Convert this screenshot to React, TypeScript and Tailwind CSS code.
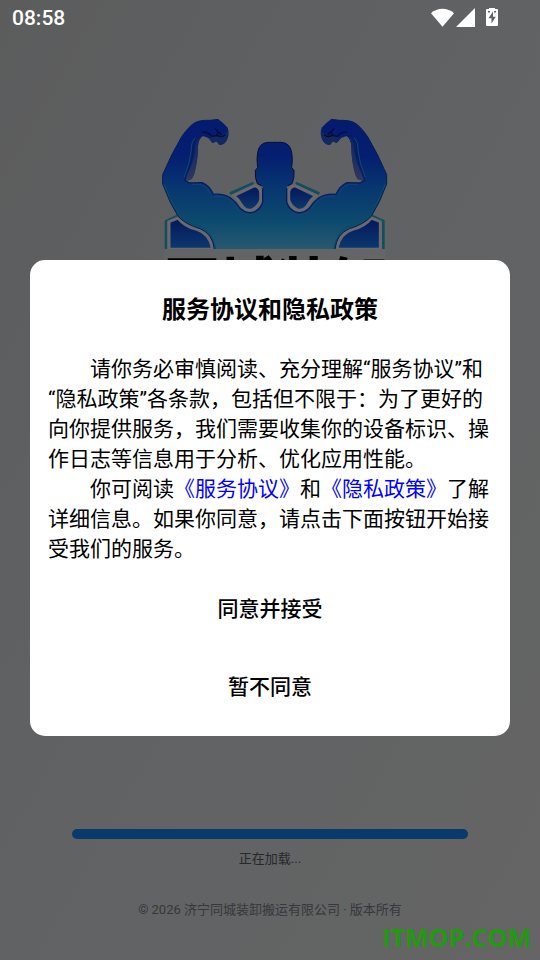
function StatusIcons() {
  return (
    <svg width="68" height="20" viewBox="0 0 68 20" fill="white" aria-hidden="true">
      <path d="M11.500 18.800 L0 5.200 C6-0.800 17-0.800 23 5.200 Z" />
      <path d="M44 0 V19 H25 Z" />
      <path
        fillRule="evenodd"
        d="M58 -0.500 H64 V1 H66 Q67 1 67 2 V17 Q67 18 66 18 H56 Q55 18 55 17 V2 Q55 1 56 1 H58 Z M62 3.500 L57.500 10.200 H60.500 V15.500 L64.800 8.800 H62 Z M57 3 V4.500 H59 V3 Z M63 3 V4.500 H65 V3 Z"
      />
    </svg>
  )
}

function HalfBody() {
  return (
    <g>
      {/* badge behind the shoulder */}
      <path d="M48 433 V348 L82 333" fill="none" stroke="#2a9cb4" strokeWidth="8" />
      <path d="M240 266 L311 234" fill="none" stroke="#2a9cb4" strokeWidth="9" />
      <path
        d="M57 433 V350 L84 339 Q104 364 140 373 Q180 385 188 433 Z"
        fill="url(#badge)"
        stroke="#d4d2de"
        strokeWidth="9"
      />
      <path
        d="M251 272 L314 242 Q332 246 332 264 V284 Q328 304 306 315 Q286 320 273 298 Q264 282 251 272 Z"
        fill="url(#badge)"
        stroke="#d4d2de"
        strokeWidth="9"
      />
      {/* arm, shoulder and half of the head */}
      <path
        d="M376 433 H193 Q188 386 150 371 Q106 358 84 334 L60 290 L38 237 V209 L65 150 L95 95 Q118 62 135 53 Q150 45 180 46 L205 43 L220 55 L233 68 Q239 88 232 102 Q226 119 208 120 L200 109 L188 114 L175 99 L158 93 Q146 102 144 123 Q144 159 137 185 Q134 206 126 222 L106 228 L118 234 L157 233 Q178 242 190 268 Q220 265 242 279 Q258 290 270 310 Q292 330 315 320 Q333 309 338 291 V245 L322 236 Q314 219 316 196 L323 188 Q319 162 323 142 Q328 113 355 112 H376 Z"
        fill="url(#body)"
      />
      <path
        d="M158 93 Q137 99 136 126 Q134 160 120 193 L105 226 Q124 229 132 210 Q143 176 144 123 Q145 101 158 93 Z"
        fill="url(#inner)"
      />
      <path
        d="M200 86 Q220 94 234 78 Q235 105 222 116 Q207 124 200 109 L188 114 L173 96 Q183 103 200 86 Z"
        fill="#2450c0"
      />
      <path
        d="M158 92 Q132 91 129 124 Q129 166 109 207 L104 226 L119 234 L157 233 Q178 242 190 268 M188 268 Q222 265 242 279 Q258 290 270 310 Q292 330 315 320 Q334 309 338 291 V250"
        fill="none"
        stroke="#0b3ac4"
        strokeWidth="4"
      />
      <path
        d="M136 98 Q123 110 124 135 Q120 174 102 218 M125 238 H153 Q171 244 183 268 M193 275 Q223 270 239 284 Q256 298 266 315 Q290 337 318 324"
        fill="none"
        stroke="#2f8ad8"
        strokeWidth="3"
      />
      <path
        d="M42 237 Q58 285 89 329 Q109 350 148 362 Q185 377 197 433"
        fill="none"
        stroke="#1b94d0"
        strokeWidth="4"
      />
      <path
        d="M205 43 L180 46 Q150 45 135 53 Q118 62 95 95 L65 150 L38 209 V237 L60 290 L84 334 Q106 358 150 371 Q188 386 193 433"
        fill="none"
        stroke="#0939a8"
        strokeWidth="3"
      />
      <path
        d="M156 82 Q174 78 185 94 L202 91 Q216 99 226 89 M195 70 L205 81 L199 92 M205 80 L215 89"
        fill="none"
        stroke="#05186e"
        strokeWidth="4"
      />
      <path
        d="M376 112 H355 Q328 113 323 142 Q319 162 323 188 L316 196 Q314 219 322 236 L335 242"
        fill="none"
        stroke="#101c70"
        strokeWidth="3"
      />
    </g>
  )
}

function Logo() {
  return (
    <div className="ml-[10px] w-[250px]">
      <svg className="block" width="250" height="144" viewBox="0 0 750 432" aria-hidden="true">
        <defs>
          <linearGradient id="body" gradientUnits="userSpaceOnUse" x1="0" y1="40" x2="0" y2="433">
            <stop offset="0" stopColor="#0a34e0" />
            <stop offset="0.300" stopColor="#0940e0" />
            <stop offset="0.550" stopColor="#1070e0" />
            <stop offset="0.780" stopColor="#1894dc" />
            <stop offset="1" stopColor="#50b4e0" />
          </linearGradient>
          <linearGradient id="badge" x1="0" y1="0" x2="0" y2="1">
            <stop offset="0" stopColor="#0a2cb4" />
            <stop offset="1" stopColor="#1774dc" />
          </linearGradient>
          <linearGradient id="inner" x1="0" y1="0" x2="0" y2="1">
            <stop offset="0" stopColor="#1a49c4" />
            <stop offset="1" stopColor="#5f6fb8" />
          </linearGradient>
        </defs>
        <HalfBody />
        <g transform="translate(748 0) scale(-1 1)">
          <HalfBody />
        </g>
      </svg>
      <p className="mx-[14px] bg-white/10 pt-1 text-center text-[56px] leading-[64px] font-black whitespace-nowrap text-black">
        同城装卸
      </p>
    </div>
  )
}

function SplashScreen() {
  return (
    <main className="flex min-h-screen flex-col items-center bg-linear-to-br from-[#b8b9ba] via-[#c2c5c8] to-[#cacaca] pt-[105px] pb-10">
      <Logo />
      <div className="mt-auto w-full px-[72px]">
        <div
          role="progressbar"
          aria-label="正在加载"
          className="h-[10px] w-full rounded-full bg-[#1074d6]"
        ></div>
      </div>
      <p className="mt-[10px] text-[13px] leading-5 text-[#4d5053]">正在加载...</p>
      <footer className="mt-[31px] text-[13px] leading-5 text-[#6d7076]">
        © 2026 济宁同城装卸搬运有限公司 · 版本所有
      </footer>
    </main>
  )
}

function PrivacyDialog() {
  return (
    <section
      role="dialog"
      aria-modal="true"
      aria-labelledby="privacy-title"
      className="w-full rounded-[15px] bg-white px-[18px] pt-8 pb-[10px] text-[21px] leading-[30px] text-black"
    >
      <h1 id="privacy-title" className="text-center text-2xl leading-9 font-bold">
        服务协议和隐私政策
      </h1>
      <div className="mt-[26px]">
        <p className="indent-[42px]">
          请你务必审慎阅读、充分理解“服务协议”和“隐私政策”各条款，包括但不限于：为了更好的向你提供服务，我们需要收集你的设备标识、操作日志等信息用于分析、优化应用性能。
        </p>
        <p className="indent-[42px]">
          你可阅读
          <a href="#terms" className="text-[#0000ff]">《服务协议》</a>和
          <a href="#privacy" className="text-[#0000ff]">《隐私政策》</a>
          了解详细信息。如果你同意，请点击下面按钮开始接受我们的服务。
        </p>
      </div>
      <div className="mt-[6px] flex flex-col font-medium">
        <button type="button" className="h-[78px]">同意并接受</button>
        <button type="button" className="h-[78px]">暂不同意</button>
      </div>
    </section>
  )
}

export default function App() {
  return (
    <div lang="zh-CN" className="relative font-[Roboto,'Noto_Sans_CJK_SC',sans-serif]">
      <SplashScreen />

      {/* Dimmed layer with the consent dialog */}
      <div className="absolute inset-0 flex items-center bg-black/50 px-[30px] pt-9">
        <PrivacyDialog />
      </div>

      {/* Status bar */}
      <header className="absolute inset-x-0 top-0 flex h-9 items-center justify-between pr-[41px] pl-3 text-white">
        <time className="text-[21px] leading-9 font-medium">08:58</time>
        <StatusIcons />
      </header>

      <span className="absolute right-[9px] bottom-[7px] font-['Open_Sans'] text-[25px] leading-8 font-bold text-[#229a10]">
        ITMOP.COM
      </span>
    </div>
  )
}
